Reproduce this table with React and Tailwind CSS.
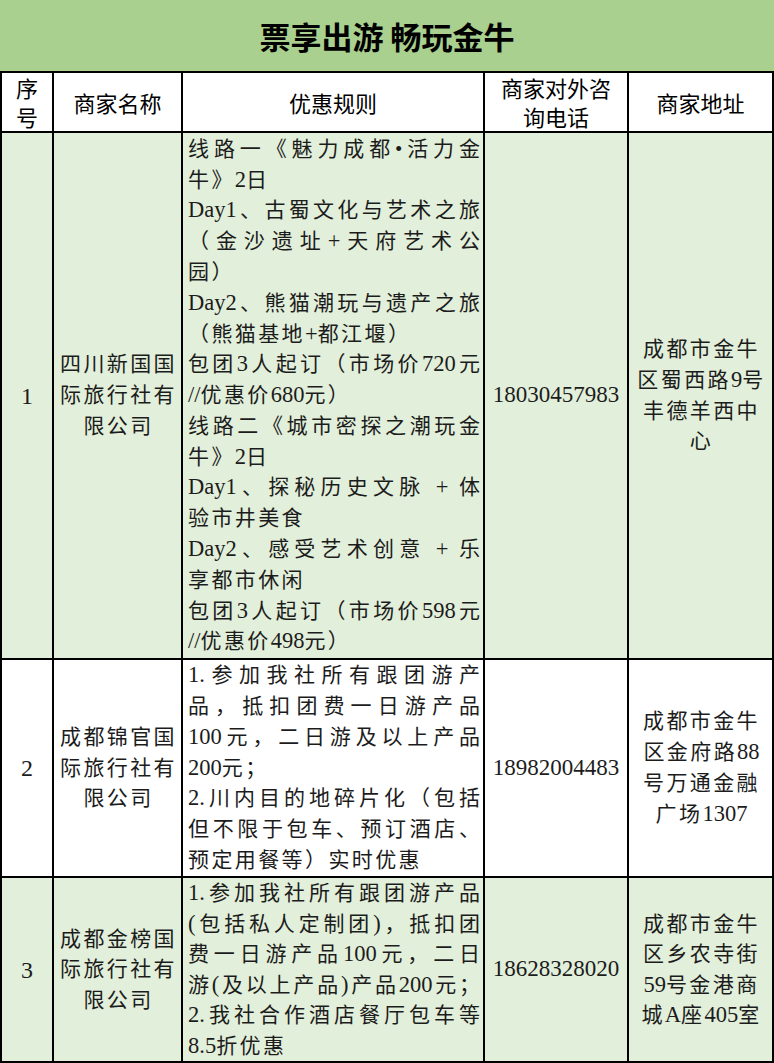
const SERIF = "font-['Liberation_Serif','Noto_Sans_CJK_SC',serif]"

const ROWS = [
  {
    no: '1',
    bg: 'bg-[#e2efda]',
    lead: 'leading-[30.8px]',
    name: ['四川新国国', '际旅行社有', '限公司'],
    rules: [
      ['线路一《魅力成都•活力金', 1],
      ['牛》2日', 0],
      ['Day1、古蜀文化与艺术之旅', 1],
      ['（金沙遗址+天府艺术公', 1],
      ['园）', 0],
      ['Day2、熊猫潮玩与遗产之旅', 1],
      ['（熊猫基地+都江堰）', 0],
      ['包团3人起订（市场价720元', 1],
      ['//优惠价680元）', 0],
      ['线路二《城市密探之潮玩金', 1],
      ['牛》2日', 0],
      ['Day1、探秘历史文脉 + 体', 1],
      ['验市井美食', 0],
      ['Day2、感受艺术创意 + 乐', 1],
      ['享都市休闲', 0],
      ['包团3人起订（市场价598元', 1],
      ['//优惠价498元）', 0],
    ],
    phone: '18030457983',
    addr: ['成都市金牛', '区蜀西路9号', '丰德羊西中', '心'],
  },
  {
    no: '2',
    bg: 'bg-white',
    lead: 'leading-[30.8px]',
    name: ['成都锦官国', '际旅行社有', '限公司'],
    rules: [
      ['1.参加我社所有跟团游产', 1],
      ['品，抵扣团费一日游产品', 1],
      ['100元，二日游及以上产品', 1],
      ['200元；', 0],
      ['2.川内目的地碎片化（包括', 1],
      ['但不限于包车、预订酒店、', 1],
      ['预定用餐等）实时优惠', 0],
    ],
    phone: '18982004483',
    addr: ['成都市金牛', '区金府路88', '号万通金融', '广场1307'],
  },
  {
    no: '3',
    bg: 'bg-[#e2efda]',
    lead: 'leading-[30.5px]',
    name: ['成都金榜国', '际旅行社有', '限公司'],
    rules: [
      ['1.参加我社所有跟团游产品', 1],
      ['(包括私人定制团)，抵扣团', 1],
      ['费一日游产品100元，二日', 1],
      ['游(及以上产品)产品200元；', 1],
      ['2.我社合作酒店餐厅包车等', 1],
      ['8.5折优惠', 0],
    ],
    phone: '18628328020',
    addr: ['成都市金牛', '区乡农寺街', '59号金港商', '城A座405室'],
  },
]

// latin / digit runs are set a bit larger and without the CJK letter spacing
function Rich({ text }) {
  return text.split(/([A-Za-z0-9.\/()+]+)/).map((part, i) =>
    i % 2 ? (
      <span key={i} className="text-[22.5px] tracking-normal">{part}</span>
    ) : (
      part
    )
  )
}

function Header({ children }) {
  return (
    <div className="bg-white flex flex-col items-center justify-center text-center leading-[29px] text-[22px] text-black font-['Noto_Sans_CJK_SC',sans-serif]">
      {children}
    </div>
  )
}

export default function App() {
  return (
    <div className={`w-[774px] h-[1063px] overflow-hidden bg-white text-[#1c1c1c] ${SERIF}`}>
      <div className="h-[71px] bg-[#a9d08e] flex items-center justify-center">
        <h1 className="text-[31px] font-bold text-black font-['Noto_Sans_CJK_SC',serif] pt-[2px]">票享出游 畅玩金牛</h1>
      </div>

      <div className="grid grid-cols-[50px_127px_300px_142px_143px] grid-rows-[58px_525px_216px_183px] gap-[2px] p-[2px] bg-black">
        <Header>
          <span>序</span>
          <span>号</span>
        </Header>
        <Header>商家名称</Header>
        <Header>优惠规则</Header>
        <Header>
          <span>商家对外咨</span>
          <span>询电话</span>
        </Header>
        <Header>商家地址</Header>

        {ROWS.map(row => (
          <div key={row.no} className="contents">
            <div className={`${row.bg} flex items-center justify-center text-[24px]`}>{row.no}</div>

            <div className={`${row.bg} flex flex-col justify-center items-center text-[21px] ${row.lead}`}>
              {row.name.map((l, i) => (
                <span key={i} className="tracking-[2.4px] pl-[2px]">{l}</span>
              ))}
            </div>

            <div className={`${row.bg} flex flex-col justify-center pl-[5px] pr-[3px] text-[21px] ${row.lead}`}>
              {row.rules.map(([l, full], i) =>
                full ? (
                  <div key={i} className="whitespace-nowrap text-justify [text-align-last:justify]"><Rich text={l} /></div>
                ) : (
                  <div key={i} className="whitespace-nowrap tracking-[2.4px]"><Rich text={l} /></div>
                )
              )}
            </div>

            <div className={`${row.bg} flex items-center justify-center text-[23px]`}>{row.phone}</div>

            <div className={`${row.bg} flex flex-col justify-center items-center text-[21px] ${row.lead}`}>
              {row.addr.map((l, i) => (
                <span key={i} className="tracking-[2.4px] pl-[2px]"><Rich text={l} /></span>
              ))}
            </div>
          </div>
        ))}
      </div>
    </div>
  )
}
